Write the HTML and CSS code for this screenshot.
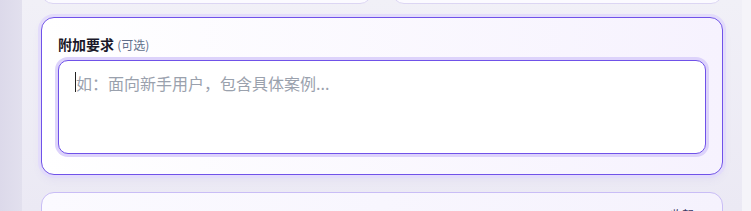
FILE: index.html
```html
<!DOCTYPE html>
<html lang="zh">
<head>
<meta charset="utf-8">
<link rel="stylesheet" href="styles.css">
</head>
<body>
<div class="app">
  <aside class="side"></aside>
  <main class="main">
    <div class="content">
      <div class="top-row">
        <div class="mini-card"></div>
        <div class="mini-card"></div>
      </div>
      <section class="card active">
        <label class="label">附加要求 <span class="opt">(可选)</span></label>
        <div class="field">
          <span class="caret"></span><span class="ph">如：面向新手用户，包含具体案例...</span>
        </div>
      </section>
      <section class="card next">
        <div class="next-row"><span class="next-text">收起</span></div>
      </section>
    </div>
  </main>
  <div class="scroll"></div>
</div>
</body>
</html>
```

FILE: styles.css
```css
* { box-sizing: border-box; }
html, body { margin: 0; padding: 0; }
body {
  width: 751px;
  height: 211px;
  overflow: hidden;
  font-family: "Noto Sans CJK SC", "Noto Sans", sans-serif;
  background: #efeef6;
}
.app {
  display: flex;
  height: 211px;
}
.side {
  width: 22px;
  flex: none;
  background: linear-gradient(90deg, #dcd9ea, #e2e0ee);
}
.main {
  flex: 1;
  background: linear-gradient(180deg, #f1f0f7, #ebe9f4);
  padding-left: 19px;
  padding-right: 19px;
  overflow: hidden;
}
.scroll {
  width: 9px;
  flex: none;
  background: #f5f4f9;
}
.content {
  width: 682px;
}
.top-row {
  display: grid;
  grid-template-columns: 1fr 1fr;
  gap: 20px;
  margin-top: -36px;
}
.mini-card {
  height: 40px;
  background: #fbfaff;
  border: 1px solid #dcd6f3;
  border-radius: 12px;
}
.card {
  border-radius: 13px;
  border: 1px solid #c9bdf6;
  background: linear-gradient(90deg, #ffffff, #f6f2fe);
}
.card.active {
  margin-top: 13px;
  border-color: #7052e9;
  box-shadow: 0 0 0 3px #e3dcfb, 0 4px 10px rgba(110, 90, 200, 0.08);
  padding: 16px 16px 20px 16px;
}
.label {
  display: block;
  height: 20px;
  overflow: hidden;
  font-size: 14px;
  line-height: 20px;
  font-weight: 700;
  color: #1a1829;
  margin-bottom: 6px;
}
.opt {
  font-size: 12px;
  line-height: 16px;
  font-weight: 400;
  color: #5f6f8a;
}
.field {
  height: 94px;
  background: #ffffff;
  border: 1px solid #7052e9;
  border-radius: 10px;
  box-shadow: 0 0 0 3px #ddd3fb;
  padding: 10px 16px;
  display: flex;
  align-items: flex-start;
  font-size: 16px;
  line-height: 24px;
}
.caret {
  width: 1px;
  height: 20px;
  margin-top: 1px;
  background: #222;
  flex: none;
}
.ph {
  color: #9aa1ad;
}
.card.next {
  margin-top: 17px;
  height: 40px;
  background: linear-gradient(90deg, #fbfaff, #f5f2fd);
}
.next-row {
  display: flex;
  justify-content: flex-end;
  padding: 14px 28px 0 0;
}
.next-text {
  font-size: 12px;
  line-height: 16px;
  color: #3b3560;
}
```
